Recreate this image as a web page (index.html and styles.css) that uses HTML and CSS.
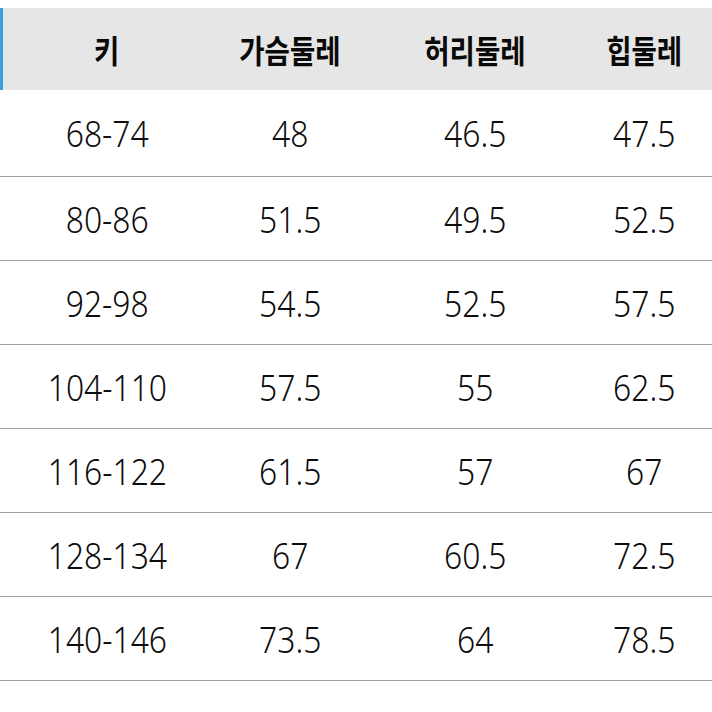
FILE: index.html
```html
<!DOCTYPE html>
<html lang="ko">
<head>
<meta charset="utf-8">
<link rel="stylesheet" href="styles.css">
</head>
<body>
<div class="table">
  <div class="row head">
    <div class="cell"><span>키</span></div>
    <div class="cell"><span>가슴둘레</span></div>
    <div class="cell"><span>허리둘레</span></div>
    <div class="cell"><span>힙둘레</span></div>
  </div>
  <div class="row first">
    <div class="cell"><span>68-74</span></div>
    <div class="cell"><span>48</span></div>
    <div class="cell"><span>46.5</span></div>
    <div class="cell"><span>47.5</span></div>
  </div>
  <div class="row">
    <div class="cell"><span>80-86</span></div>
    <div class="cell"><span>51.5</span></div>
    <div class="cell"><span>49.5</span></div>
    <div class="cell"><span>52.5</span></div>
  </div>
  <div class="row">
    <div class="cell"><span>92-98</span></div>
    <div class="cell"><span>54.5</span></div>
    <div class="cell"><span>52.5</span></div>
    <div class="cell"><span>57.5</span></div>
  </div>
  <div class="row">
    <div class="cell"><span>104-110</span></div>
    <div class="cell"><span>57.5</span></div>
    <div class="cell"><span>55</span></div>
    <div class="cell"><span>62.5</span></div>
  </div>
  <div class="row">
    <div class="cell"><span>116-122</span></div>
    <div class="cell"><span>61.5</span></div>
    <div class="cell"><span>57</span></div>
    <div class="cell"><span>67</span></div>
  </div>
  <div class="row">
    <div class="cell"><span>128-134</span></div>
    <div class="cell"><span>67</span></div>
    <div class="cell"><span>60.5</span></div>
    <div class="cell"><span>72.5</span></div>
  </div>
  <div class="row">
    <div class="cell"><span>140-146</span></div>
    <div class="cell"><span>73.5</span></div>
    <div class="cell"><span>64</span></div>
    <div class="cell"><span>78.5</span></div>
  </div>
</div>
</body>
</html>
```
FILE: styles.css
```css
html, body {
  margin: 0;
  padding: 0;
  background: #ffffff;
}
body {
  width: 712px;
  height: 712px;
  overflow: hidden;
  font-family: "Noto Sans", "Noto Sans CJK KR", sans-serif;
  color: #0d0d0d;
}
.table {
  padding-top: 8px;
}
.row {
  display: grid;
  grid-template-columns: 214px 152px 218px 120px;
  height: 83px;
  border-bottom: 1px solid #9e9e9e;
  align-items: center;
}
.row.first {
  height: 86px;
}
.row.head {
  height: 82px;
  border-bottom: none;
  background: #e6e6e6;
  box-shadow: inset 3px 0 0 #3a9fe0;
}
.cell {
  text-align: center;
}
.cell span {
  display: inline-block;
  font-size: 37px;
  font-weight: 300;
  line-height: 1;
  transform: scaleX(0.86);
}
.head .cell span {
  font-family: "Noto Sans CJK KR", sans-serif;
  font-weight: 700;
  font-size: 32px;
  color: #0a0a0a;
  transform: scaleX(0.86);
  padding-top: 2px;
}
```
